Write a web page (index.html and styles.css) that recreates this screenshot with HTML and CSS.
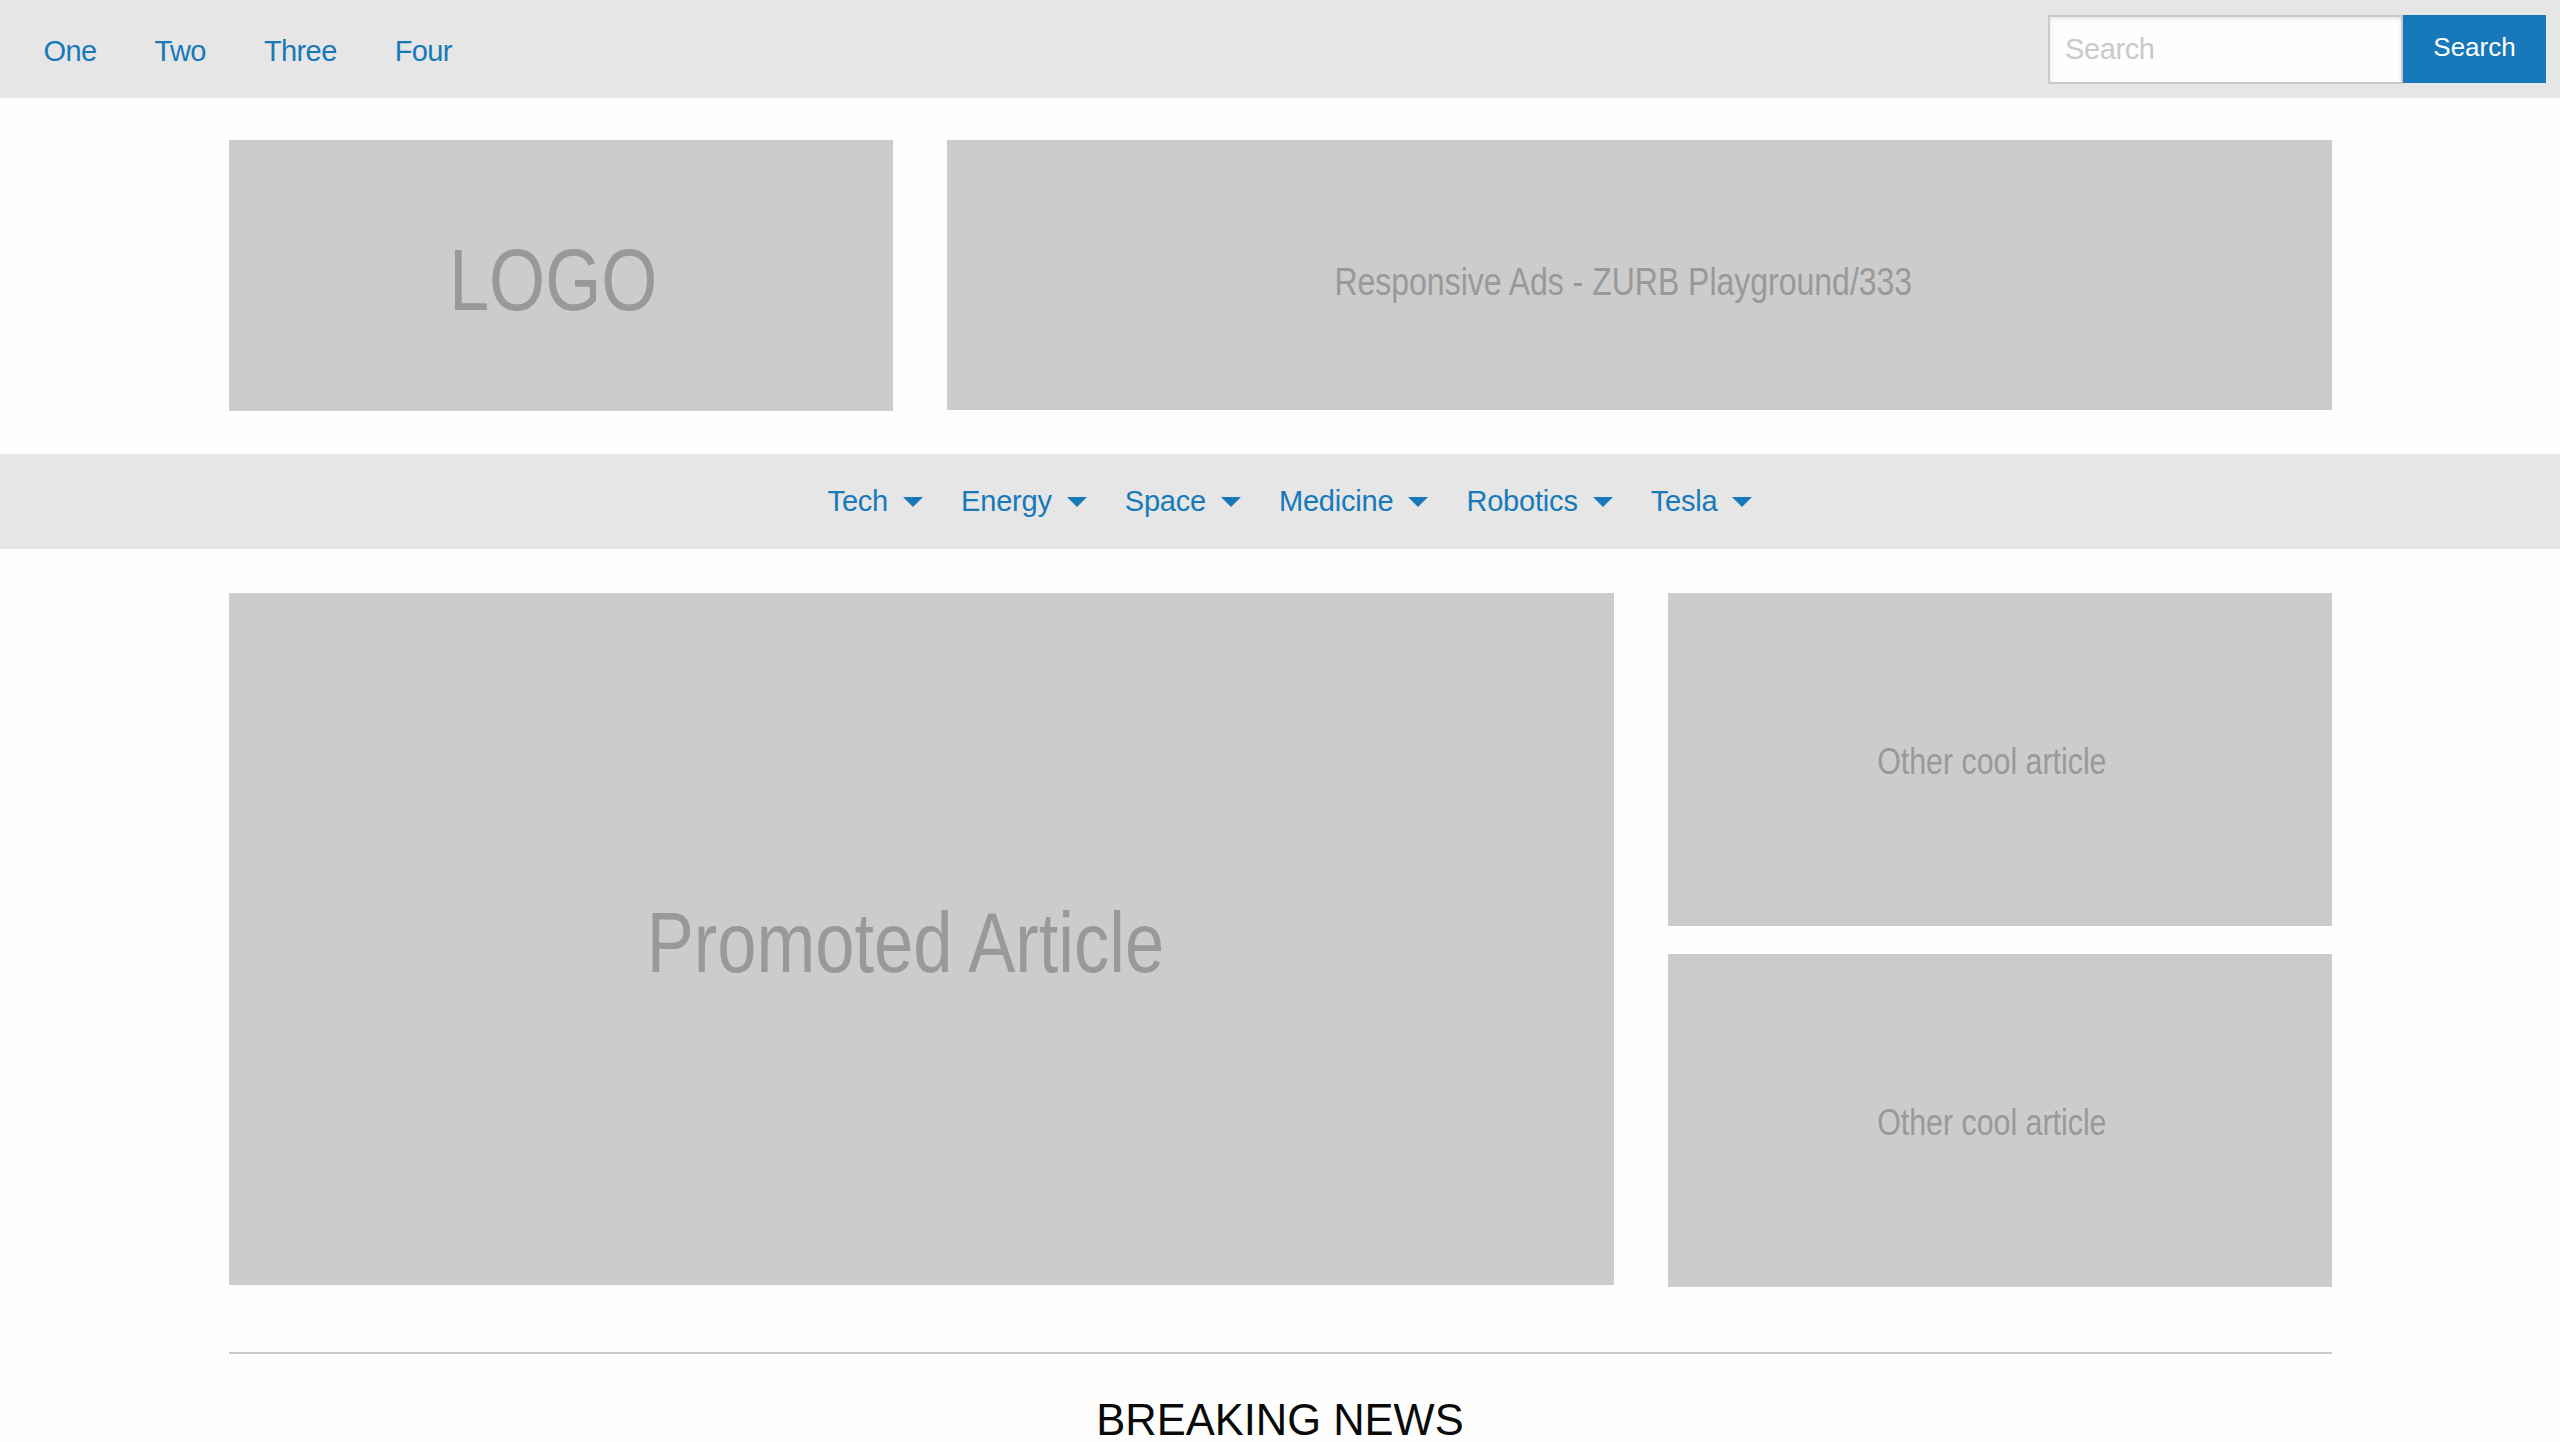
FILE: index.html
```html
<!DOCTYPE html>
<html lang="en">
<head>
<meta charset="utf-8">
<title>Tech News</title>
<link rel="stylesheet" href="styles.css">
</head>
<body>
<header class="topbar">
  <ul class="topmenu">
    <li><a href="#">One</a></li>
    <li><a href="#">Two</a></li>
    <li><a href="#">Three</a></li>
    <li><a href="#">Four</a></li>
  </ul>
  <form class="search">
    <input class="search-input" type="search" placeholder="Search">
    <button class="search-button" type="button">Search</button>
  </form>
</header>

<div class="row header-row">
  <div class="ph ph-logo"><span class="ph-text">LOGO</span></div>
  <div class="ph ph-ad"><span class="ph-text">Responsive Ads - ZURB Playground/333</span></div>
</div>

<nav class="catbar">
  <ul class="catmenu">
    <li><a href="#">Tech<span class="caret"></span></a></li>
    <li><a href="#">Energy<span class="caret"></span></a></li>
    <li><a href="#">Space<span class="caret"></span></a></li>
    <li><a href="#">Medicine<span class="caret"></span></a></li>
    <li><a href="#">Robotics<span class="caret"></span></a></li>
    <li><a href="#">Tesla<span class="caret"></span></a></li>
  </ul>
</nav>

<div class="row main-row">
  <div class="ph ph-promo"><span class="ph-text">Promoted Article</span></div>
  <div class="side">
    <div class="ph ph-other"><span class="ph-text">Other cool article</span></div>
    <div class="ph ph-other"><span class="ph-text">Other cool article</span></div>
  </div>
</div>

<hr class="divider">
<h3 class="breaking">BREAKING NEWS</h3>
</body>
</html>
```

FILE: styles.css
```css
html, body {
  margin: 0;
  padding: 0;
}
body {
  background: #fefefe;
  color: #0a0a0a;
  font-family: "Liberation Sans", Arial, Helvetica, sans-serif;
}

/* top bar */
.topbar {
  display: flex;
  justify-content: space-between;
  align-items: center;
  height: 98px;
  padding: 0 14px 0 14.5px;
  box-sizing: border-box;
  background: #e6e6e6;
}
.topmenu {
  display: flex;
  list-style: none;
  margin: 0;
  padding: 4px 0 0;
}
.topmenu a {
  display: block;
  padding: 0 29px;
  font-size: 29px;
  line-height: 29px;
  letter-spacing: -0.6px;
  color: #1779ba;
  text-decoration: none;
}
.search {
  display: flex;
  align-items: flex-start;
  margin: 0;
}
.search-input {
  width: 355px;
  height: 69px;
  box-sizing: border-box;
  margin: 0;
  padding: 0 15px;
  border: 2px solid #cacaca;
  background: #fefefe;
  box-shadow: inset 0 2px 4px rgba(10, 10, 10, 0.1);
  font-family: "Liberation Sans", Arial, sans-serif;
  font-size: 29px;
  letter-spacing: -0.4px;
  color: #0a0a0a;
  outline: none;
}
.search-input::placeholder {
  color: #cacaca;
}
.search-button {
  width: 143px;
  height: 68px;
  margin: 0;
  padding: 0 0 3px;
  border: 0;
  background: #1779ba;
  color: #fefefe;
  font-family: "Liberation Sans", Arial, sans-serif;
  font-size: 26px;
  line-height: 1;
}

/* rows */
.row {
  width: 2103px;
  margin: 0 auto;
  display: grid;
  column-gap: 54px;
}
.header-row {
  grid-template-columns: 664px 1385px;
  align-items: start;
  padding: 42px 0 43px;
}
.main-row {
  grid-template-columns: 1385px 664px;
  margin-top: 44px;
}

/* placeholders */
.ph {
  display: flex;
  align-items: center;
  justify-content: center;
  box-sizing: border-box;
  padding-right: 2.3%;
  background: #cccccc;
  color: #999999;
  font-family: "Liberation Sans", Arial, sans-serif;
  line-height: 1;
  white-space: nowrap;
}
.ph-text {
  display: inline-block;
  transform: scaleX(0.82);
  transform-origin: center;
}
.ph-logo {
  height: 271px;
  font-size: 88px;
  padding-top: 8px;
}
.ph-ad {
  height: 270px;
  font-size: 39px;
  padding-top: 13px;
}
.ph-promo {
  height: 692px;
  font-size: 86px;
  padding-top: 6px;
}
.side {
  display: flex;
  flex-direction: column;
  gap: 28px;
}
.ph-other {
  height: 333px;
  font-size: 37px;
  padding-top: 3px;
}

/* category bar */
.catbar {
  display: flex;
  justify-content: center;
  align-items: center;
  height: 95px;
  background: #e6e6e6;
}
.catmenu {
  display: flex;
  list-style: none;
  margin: 0;
  padding: 0;
}
.catmenu a {
  display: flex;
  align-items: center;
  gap: 15px;
  padding: 0 9px 0 29px;
  font-size: 29px;
  line-height: 29px;
  letter-spacing: -0.2px;
  color: #1779ba;
  text-decoration: none;
}
.caret {
  width: 0;
  height: 0;
  border-left: 10px solid transparent;
  border-right: 10px solid transparent;
  border-top: 10px solid #1779ba;
}

/* bottom */
.divider {
  width: 2103px;
  height: 0;
  margin: 65px auto 0;
  border: 0;
  border-top: 2px solid #cacaca;
}
.breaking {
  margin: 36px 0 0;
  text-align: center;
  font-size: 43.5px;
  line-height: 1.4;
  font-weight: normal;
  color: #0a0a0a;
}
```
